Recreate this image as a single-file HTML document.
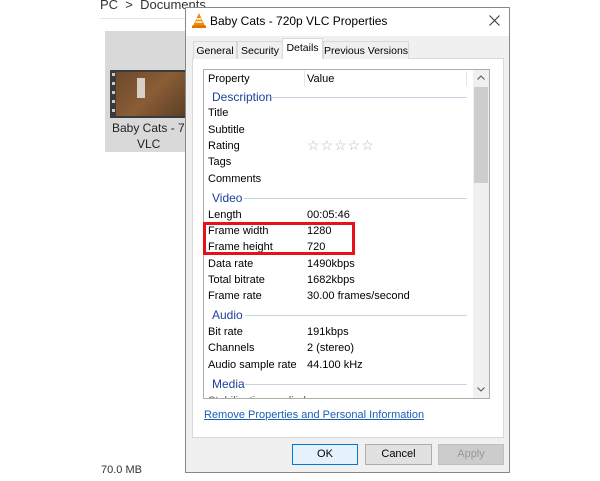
<!DOCTYPE html>
<html><head><meta charset="utf-8"><style>
*{margin:0;padding:0;box-sizing:border-box}
body{width:600px;height:481px;background:#fff;position:relative;overflow:hidden;font-family:"Liberation Sans",sans-serif;font-size:11px;color:#000}
.a{position:absolute;white-space:nowrap}
.row{position:absolute;left:208px;font-size:11px;margin-top:1px}
.val{position:absolute;left:307px;font-size:11px;margin-top:1px}
.sec{position:absolute;left:212px;color:#1e3f9a;font-size:12px;margin-top:1px}
.line{position:absolute;height:1px;background:#c8d3e6;margin-top:1px}
.btn{position:absolute;top:444px;height:21px;border:1px solid #adadad;background:#e1e1e1;text-align:center;line-height:19px;font-size:11px}
</style></head><body>
<div class="a" style="left:100px;top:-3px;font-size:13px;color:#333">PC &nbsp;&gt;&nbsp; Documents</div>
<div class="a" style="left:100px;top:18px;width:90px;height:1px;background:#e5e5e5"></div>
<div class="a" style="left:105px;top:31px;width:82px;height:121px;background:#d9d9d9"></div>
<div class="a" style="left:110px;top:70px;width:77px;height:48px;background:#3a3a3a"></div>
<div class="a" style="left:116px;top:72px;width:71px;height:44px;background:linear-gradient(135deg,#6b4a2c,#8a5d36 50%,#5a3e25)"></div>
<div class="a" style="left:137px;top:78px;width:8px;height:20px;background:#d8d0c4"></div>
<div class="a" style="left:112px;top:73px;width:3px;height:3px;background:#ccc;box-shadow:0 9px #ccc,0 18px #ccc,0 27px #ccc,0 36px #ccc"></div>
<div class="a" style="left:112px;top:121px;font-size:12px;color:#222">Baby Cats - 720</div>
<div class="a" style="left:137px;top:137px;font-size:12px;color:#222">VLC</div>
<div class="a" style="left:101px;top:464px;font-size:11px;color:#333">70.0 MB</div>

<div class="a" style="left:185px;top:7px;width:325px;height:466px;background:#f0f0f0;border:1px solid #888"></div>
<div class="a" style="left:186px;top:8px;width:323px;height:28px;background:#fff"></div>
<svg class="a" style="left:192px;top:13px" width="14" height="15" viewBox="0 0 14 15"><path d="M7 0L1 13h12z" fill="#f08a00"/><path d="M4.6 6h4.8M3.6 9h6.8" stroke="#fff" stroke-width="1.4"/><rect x="0" y="12.5" width="14" height="2.5" fill="#e07000"/></svg>
<div class="a" style="left:210px;top:14px;font-size:12px;color:#000">Baby Cats - 720p VLC Properties</div>
<svg class="a" style="left:489px;top:15px" width="11" height="11" viewBox="0 0 11 11"><path d="M0.5 0.5L10.5 10.5M10.5 0.5L0.5 10.5" stroke="#333" stroke-width="1"/></svg>

<div class="a" style="left:192px;top:58px;width:312px;height:380px;background:#fff;border:1px solid #d9d9d9"></div>
<div class="a" style="left:193px;top:41px;width:44px;height:18px;border:1px solid #d9d9d9;border-bottom:none;background:#f0f0f0;text-align:center;line-height:18px;font-size:10.5px">General</div>
<div class="a" style="left:237px;top:41px;width:46px;height:18px;border:1px solid #d9d9d9;border-bottom:none;background:#f0f0f0;text-align:center;line-height:18px;font-size:10.5px">Security</div>
<div class="a" style="left:282px;top:38px;width:41px;height:21px;border:1px solid #d9d9d9;border-bottom:none;background:#fff;text-align:center;line-height:19px;font-size:10.5px">Details</div>
<div class="a" style="left:323px;top:41px;width:86px;height:18px;border:1px solid #d9d9d9;border-bottom:none;background:#f0f0f0;text-align:center;line-height:18px;font-size:10.5px">Previous Versions</div>

<div class="a" style="left:203px;top:69px;width:287px;height:330px;border:1px solid #adadad;background:#fff;overflow:hidden">
<div class="a" style="left:4px;top:325px;font-size:11px;color:#555">Stabilization applied</div>
</div>
<div class="a" style="left:473px;top:70px;width:16px;height:328px;background:#f0f0f0"></div>
<div class="a" style="left:474px;top:87px;width:14px;height:96px;background:#cdcdcd"></div>
<svg class="a" style="left:477px;top:75px" width="8" height="5" viewBox="0 0 8 5"><path d="M0.5 4.5L4 1L7.5 4.5" stroke="#555" fill="none"/></svg>
<svg class="a" style="left:477px;top:387px" width="8" height="5" viewBox="0 0 8 5"><path d="M0.5 0.5L4 4L7.5 0.5" stroke="#555" fill="none"/></svg>
<div class="a" style="left:304px;top:71px;width:1px;height:15px;background:#e5e5e5"></div>
<div class="a" style="left:466px;top:71px;width:1px;height:15px;background:#e5e5e5"></div>
<div class="row" style="top:72px">Property</div><div class="val" style="top:72px">Value</div>
<div class="sec" style="top:89px">Description</div><div class="line" style="left:271px;top:96px;width:196px"></div>
<div class="row" style="top:106px">Title</div>
<div class="row" style="top:123px">Subtitle</div>
<div class="row" style="top:139px">Rating</div><div class="val" style="top:136px;font-size:14px;color:#bbb;letter-spacing:1px">☆☆☆☆☆</div>
<div class="row" style="top:155px">Tags</div>
<div class="row" style="top:172px">Comments</div>
<div class="sec" style="top:190px">Video</div><div class="line" style="left:244px;top:197px;width:223px"></div>
<div class="row" style="top:208px">Length</div><div class="val" style="top:208px">00:05:46</div>
<div class="row" style="top:224px">Frame width</div><div class="val" style="top:224px">1280</div>
<div class="row" style="top:240px">Frame height</div><div class="val" style="top:240px">720</div>
<div class="row" style="top:257px">Data rate</div><div class="val" style="top:257px">1490kbps</div>
<div class="row" style="top:273px">Total bitrate</div><div class="val" style="top:273px">1682kbps</div>
<div class="row" style="top:289px">Frame rate</div><div class="val" style="top:289px">30.00 frames/second</div>
<div class="sec" style="top:307px">Audio</div><div class="line" style="left:245px;top:314px;width:222px"></div>
<div class="row" style="top:325px">Bit rate</div><div class="val" style="top:325px">191kbps</div>
<div class="row" style="top:341px">Channels</div><div class="val" style="top:341px">2 (stereo)</div>
<div class="row" style="top:358px">Audio sample rate</div><div class="val" style="top:358px">44.100 kHz</div>
<div class="sec" style="top:376px">Media</div><div class="line" style="left:245px;top:383px;width:222px"></div>
<div class="a" style="left:203px;top:222px;width:152px;height:33px;border:3px solid #e8101a"></div>

<div class="a" style="left:204px;top:409px;color:#1a5fb4;text-decoration:underline">Remove Properties and Personal Information</div>

<div class="btn" style="left:292px;width:66px;border-color:#0078d7;background:#e5f1fb">OK</div>
<div class="btn" style="left:365px;width:67px">Cancel</div>
<div class="btn" style="left:438px;width:66px;color:#999;background:#ccc;border-color:#bfbfbf">Apply</div>
</body></html>
